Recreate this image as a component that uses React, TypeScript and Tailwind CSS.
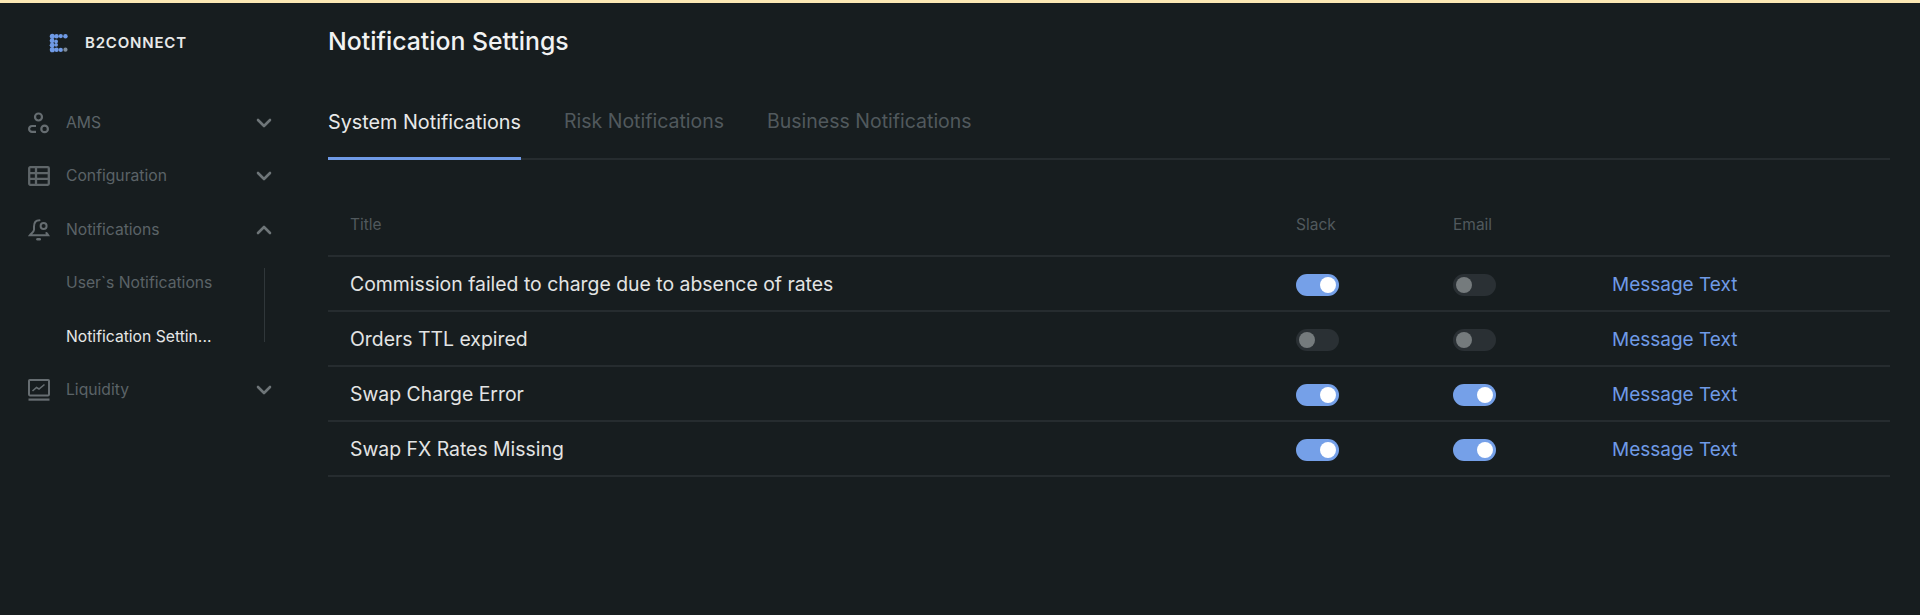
import React from 'react';
import { ChevronDown, ChevronUp } from 'lucide-react';

const rows = [
  { title: 'Commission failed to charge due to absence of rates', slack: true, email: false },
  { title: 'Orders TTL expired', slack: false, email: false },
  { title: 'Swap Charge Error', slack: true, email: true },
  { title: 'Swap FX Rates Missing', slack: true, email: true },
];

const tabs = ['System Notifications', 'Risk Notifications', 'Business Notifications'];

function Logo() {
  return (
    <svg viewBox="0 0 18 18" className="h-[20px] w-[20px]">
      <g fill="#6f9ae6">
        <circle cx="3" cy="3" r="2.3" />
        <circle cx="6.8" cy="3" r="2" />
        <circle cx="10.6" cy="2.8" r="1.9" />
        <circle cx="14.8" cy="3" r="2" />
        <circle cx="2.8" cy="7" r="2.2" />
        <circle cx="6.4" cy="7.6" r="1.7" />
        <circle cx="2.8" cy="11" r="2.2" />
        <circle cx="6.4" cy="10.6" r="1.7" />
        <circle cx="3" cy="15" r="2.3" />
        <circle cx="6.8" cy="15" r="2" />
        <circle cx="10.6" cy="15.2" r="1.9" />
      </g>
      <circle cx="14.8" cy="15" r="1.9" fill="#7d8a99" />
    </svg>
  );
}

function AmsIcon() {
  return (
    <svg viewBox="0 0 22 22" fill="none" stroke="#666d71" strokeWidth="2.2" className="h-[22px] w-[22px]">
      <circle cx="10.5" cy="5" r="3.5" />
      <path d="M8 14H4a2.9 2.9 0 0 0-2.9 2.9v0A2.9 2.9 0 0 0 4 19.8h4" />
      <circle cx="16.6" cy="16.9" r="3.3" />
    </svg>
  );
}

function ConfigIcon() {
  return (
    <svg viewBox="0 0 22 22" fill="none" stroke="#5f6669" strokeWidth="2.3" className="h-[22px] w-[22px]">
      <rect x="1.2" y="2.2" width="19.6" height="17.6" rx="1" />
      <path d="M1.2 8.2h19.6M1.2 13.8h19.6M8 2.2v17.6" />
    </svg>
  );
}

function BellIcon() {
  return (
    <svg viewBox="0 0 22 22" fill="none" stroke="#666d71" strokeWidth="2" strokeLinecap="round" className="h-[22px] w-[22px]">
      <path d="M11.5 1.2C7.8 1.2 6 3.8 6 7.5v3.2c0 2-2.6 3.6-4.2 5.6h18.4c-.6-.9-1.2-1.6-1.8-2.3" />
      <circle cx="15.6" cy="7" r="3" />
      <path d="M9.4 20.2h2.4" strokeWidth="2.4" />
    </svg>
  );
}

function LiquidityIcon() {
  return (
    <svg viewBox="0 0 22 22" fill="none" stroke="#666d71" strokeWidth="2" className="h-[22px] w-[22px]">
      <rect x="1" y="1" width="20" height="15.4" rx="0.8" />
      <path d="M4.5 12l4-3.5 2.5 1.5 5.5-4.5" strokeWidth="1.6" />
      <path d="M0.5 20.6h21" strokeWidth="2.2" />
    </svg>
  );
}

function NavItem({ icon, label, open }: { icon: React.ReactNode; label: string; open?: boolean }) {
  const Chevron = open ? ChevronUp : ChevronDown;
  return (
    <div className="flex h-[53.5px] items-center pl-[28px] pr-[52px]">
      <div className="flex w-[38px] shrink-0 items-center">{icon}</div>
      <span className="flex-1 text-[15.7px] text-[#5b6367]">{label}</span>
      <Chevron className="h-[24px] w-[24px] text-[#6e7578]" strokeWidth={2.6} />
    </div>
  );
}

function Toggle({ on }: { on: boolean }) {
  return (
    <div
      className={
        on
          ? 'flex h-[22px] w-[43px] items-center justify-end rounded-full bg-[#75a0e8] pr-[3px]'
          : 'flex h-[22px] w-[43px] items-center justify-start rounded-full bg-[#2a3034] pl-[3px]'
      }
    >
      <div className={on ? 'h-[16px] w-[16px] rounded-full bg-white' : 'h-[16px] w-[16px] rounded-full bg-[#757b7d]'} />
    </div>
  );
}

export default function App() {
  return (
    <div className="flex h-[615px] w-[1920px] flex-col overflow-hidden bg-[#171d1f] font-['Inter',sans-serif]">
      <div className="h-[3px] bg-[#fbe8b4]" />
      <div className="flex flex-1">
        <aside className="w-[328px] shrink-0">
          <div className="flex h-[78px] items-center pl-[49px] pt-[2px]">
            <Logo />
            <span className="ml-[16px] text-[15px] font-semibold tracking-[0.8px] text-[#e8e9e9]">B2CONNECT</span>
          </div>
          <div className="mt-[15px]">
            <NavItem icon={<AmsIcon />} label="AMS" />
            <NavItem icon={<ConfigIcon />} label="Configuration" />
            <NavItem icon={<BellIcon />} label="Notifications" open />
            <div className="relative pl-[66px]">
              <div className="flex h-[53.5px] items-center text-[15.7px] text-[#5b6367]">User`s Notifications</div>
              <div className="flex h-[53.5px] items-center text-[15.7px] text-[#e6e7e7]">Notification Settin...</div>
              <div className="absolute bottom-[22px] left-[264px] top-[11px] w-px bg-[#30373a]" />
            </div>
            <NavItem icon={<LiquidityIcon />} label="Liquidity" />
          </div>
        </aside>

        <main className="min-w-0 flex-1 pr-[30px]">
          <h1 className="flex h-[78px] items-center text-[24.8px] font-medium text-[#f1f2f2]">Notification Settings</h1>
          <div className="flex h-[79px] gap-[43px] border-b-2 border-[#262c2f]">
            {tabs.map((tab, i) => (
              <div
                key={tab}
                className={
                  i === 0
                    ? 'mb-[-2px] flex items-center border-b-[3px] border-[#6f9ae6] pt-[8px] text-[19.8px] text-[#e8e9e9]'
                    : 'flex items-center pt-[5px] text-[19.5px] text-[#51595d]'
                }
              >
                {tab}
              </div>
            ))}
          </div>
          <div className="mt-[16px]">
            <div className="grid h-[81px] grid-cols-[946px_157px_159px_1fr] items-center border-b-2 border-[#262c2f] pl-[22px] pt-[19px] text-[15.5px] text-[#51595d]">
              <span>Title</span>
              <span>Slack</span>
              <span>Email</span>
              <span />
            </div>
            {rows.map((row) => (
              <div
                key={row.title}
                className="grid h-[55px] grid-cols-[946px_157px_159px_1fr] items-center border-b-2 border-[#262c2f] pl-[22px] pt-[3px]"
              >
                <span className="text-[19.4px] text-[#e3e4e4]">{row.title}</span>
                <Toggle on={row.slack} />
                <Toggle on={row.email} />
                <span className="text-[19px] text-[#6f9ae6]">Message Text</span>
              </div>
            ))}
          </div>
        </main>
      </div>
    </div>
  );
}
